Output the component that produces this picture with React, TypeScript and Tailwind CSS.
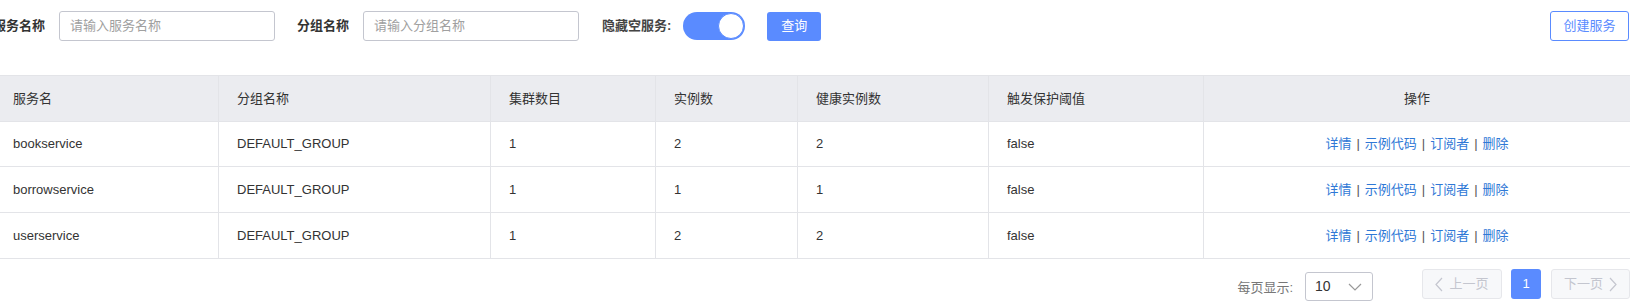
import React from "react";

const rows = [
  { name: "bookservice", group: "DEFAULT_GROUP", cluster: "1", inst: "2", healthy: "2", prot: "false" },
  { name: "borrowservice", group: "DEFAULT_GROUP", cluster: "1", inst: "1", healthy: "1", prot: "false" },
  { name: "userservice", group: "DEFAULT_GROUP", cluster: "1", inst: "2", healthy: "2", prot: "false" },
];

const gridCols = "grid grid-cols-[218px_272px_165px_142px_191px_215px_1fr]";

function Actions() {
  return (
    <div className="flex items-center justify-center text-[13px] text-[#333]">
      <span className="text-[#2f78d6]">详情</span>
      <span className="mx-[5px] text-[#555]">|</span>
      <span className="text-[#2f78d6]">示例代码</span>
      <span className="mx-[5px] text-[#555]">|</span>
      <span className="text-[#2f78d6]">订阅者</span>
      <span className="mx-[5px] text-[#555]">|</span>
      <span className="text-[#2f78d6]">删除</span>
    </div>
  );
}

export default function App() {
  return (
    <div
      className="w-[1630px] h-[306px] bg-white overflow-hidden text-[#333]"
      style={{ fontFamily: '"Liberation Sans", "Noto Sans CJK SC", sans-serif' }}
    >
      {/* toolbar */}
      <div className="flex items-center h-[30px] mt-[11px] -ml-[7px]">
        <span className="text-[13px] font-bold text-[#333]">服务名称</span>
        <div className="ml-[14px] w-[216px] h-[30px] border border-[#c4c6cf] rounded-[3px] flex items-center pl-[10px] text-[13px] text-[#a0a0a0]">
          请输入服务名称
        </div>
        <span className="ml-[22px] text-[13px] font-bold text-[#333]">分组名称</span>
        <div className="ml-[14px] w-[216px] h-[30px] border border-[#c4c6cf] rounded-[3px] flex items-center pl-[10px] text-[13px] text-[#a0a0a0]">
          请输入分组名称
        </div>
        <span className="ml-[23px] text-[13px] font-bold text-[#444]">隐藏空服务:</span>
        <div className="ml-[12px] w-[62px] h-[28px] rounded-full bg-[#5a8bff] flex items-center justify-end pr-[1px]">
          <div className="w-[26px] h-[26px] rounded-full bg-white border border-[#5a8bff]" />
        </div>
        <div className="ml-[22px] w-[54px] h-[29px] rounded-[3px] bg-[#5a8bff] text-white text-[13px] flex items-center justify-center">
          查询
        </div>
        <div className="ml-auto mr-[1px] w-[79px] h-[30px] rounded-[3px] border border-[#5a8bff] text-[#5a8bff] text-[13px] flex items-center justify-center">
          创建服务
        </div>
      </div>

      {/* table */}
      <div className="mt-[34px] border-t border-[#e3e4e8]">
        <div className={`${gridCols} h-[46px] bg-[#ebecf0] border-b border-[#e3e4e8] text-[13px] text-[#333]`}>
          <div className="pl-[13px] flex items-center">服务名</div>
          <div className="pl-[18px] flex items-center border-l border-[#e3e4e8]">分组名称</div>
          <div className="pl-[18px] flex items-center border-l border-[#e3e4e8]">集群数目</div>
          <div className="pl-[18px] flex items-center border-l border-[#e3e4e8]">实例数</div>
          <div className="pl-[18px] flex items-center border-l border-[#e3e4e8]">健康实例数</div>
          <div className="pl-[18px] flex items-center border-l border-[#e3e4e8]">触发保护阈值</div>
          <div className="flex items-center justify-center border-l border-[#e3e4e8]">操作</div>
        </div>
        {rows.map((r, i) => (
          <div
            key={r.name}
            className={`${gridCols} ${i === 0 ? "h-[45px]" : "h-[46px]"} border-b border-[#e3e4e8] text-[13px] text-[#333]`}
          >
            <div className="pl-[13px] flex items-center">{r.name}</div>
            <div className="pl-[18px] flex items-center border-l border-[#e3e4e8]">{r.group}</div>
            <div className="pl-[18px] flex items-center border-l border-[#e3e4e8]">{r.cluster}</div>
            <div className="pl-[18px] flex items-center border-l border-[#e3e4e8]">{r.inst}</div>
            <div className="pl-[18px] flex items-center border-l border-[#e3e4e8]">{r.healthy}</div>
            <div className="pl-[18px] flex items-center border-l border-[#e3e4e8]">{r.prot}</div>
            <div className="flex items-center justify-center border-l border-[#e3e4e8]">
              <Actions />
            </div>
          </div>
        ))}
      </div>

      {/* pagination */}
      <div className="flex items-start justify-end mt-[10px]">
        <span className="mt-[9px] text-[13px] text-[#777]">每页显示:</span>
        <div className="ml-[12px] mt-[3px] w-[68px] h-[29px] border border-[#c4c6cf] rounded-[3px] flex items-center pl-[9px] pr-[10px] justify-between">
          <span className="text-[14px] text-[#333]">10</span>
          <svg width="14" height="8" viewBox="0 0 14 8" fill="none">
            <path d="M1 1l6 6 6-6" stroke="#999" strokeWidth="1.2" />
          </svg>
        </div>
        <div className="ml-[49px] w-[80px] h-[30px] rounded-[3px] border border-[#e6e7eb] bg-[#f7f8fa] flex items-center justify-center gap-[6px] text-[13px] text-[#c4c6cf]">
          <svg width="8" height="15" viewBox="0 0 8 15" fill="none">
            <path d="M7 1L1 7.5 7 14" stroke="#c4c6cf" strokeWidth="1.2" />
          </svg>
          <span>上一页</span>
        </div>
        <div className="ml-[9px] w-[30px] h-[30px] rounded-[3px] bg-[#5a8bff] text-white text-[13px] flex items-center justify-center">
          1
        </div>
        <div className="ml-[10px] w-[79px] h-[30px] rounded-[3px] border border-[#e6e7eb] bg-[#f7f8fa] flex items-center justify-center gap-[6px] text-[13px] text-[#c4c6cf]">
          <span>下一页</span>
          <svg width="8" height="15" viewBox="0 0 8 15" fill="none">
            <path d="M1 1l6 6.5L1 14" stroke="#c4c6cf" strokeWidth="1.2" />
          </svg>
        </div>
      </div>
    </div>
  );
}
